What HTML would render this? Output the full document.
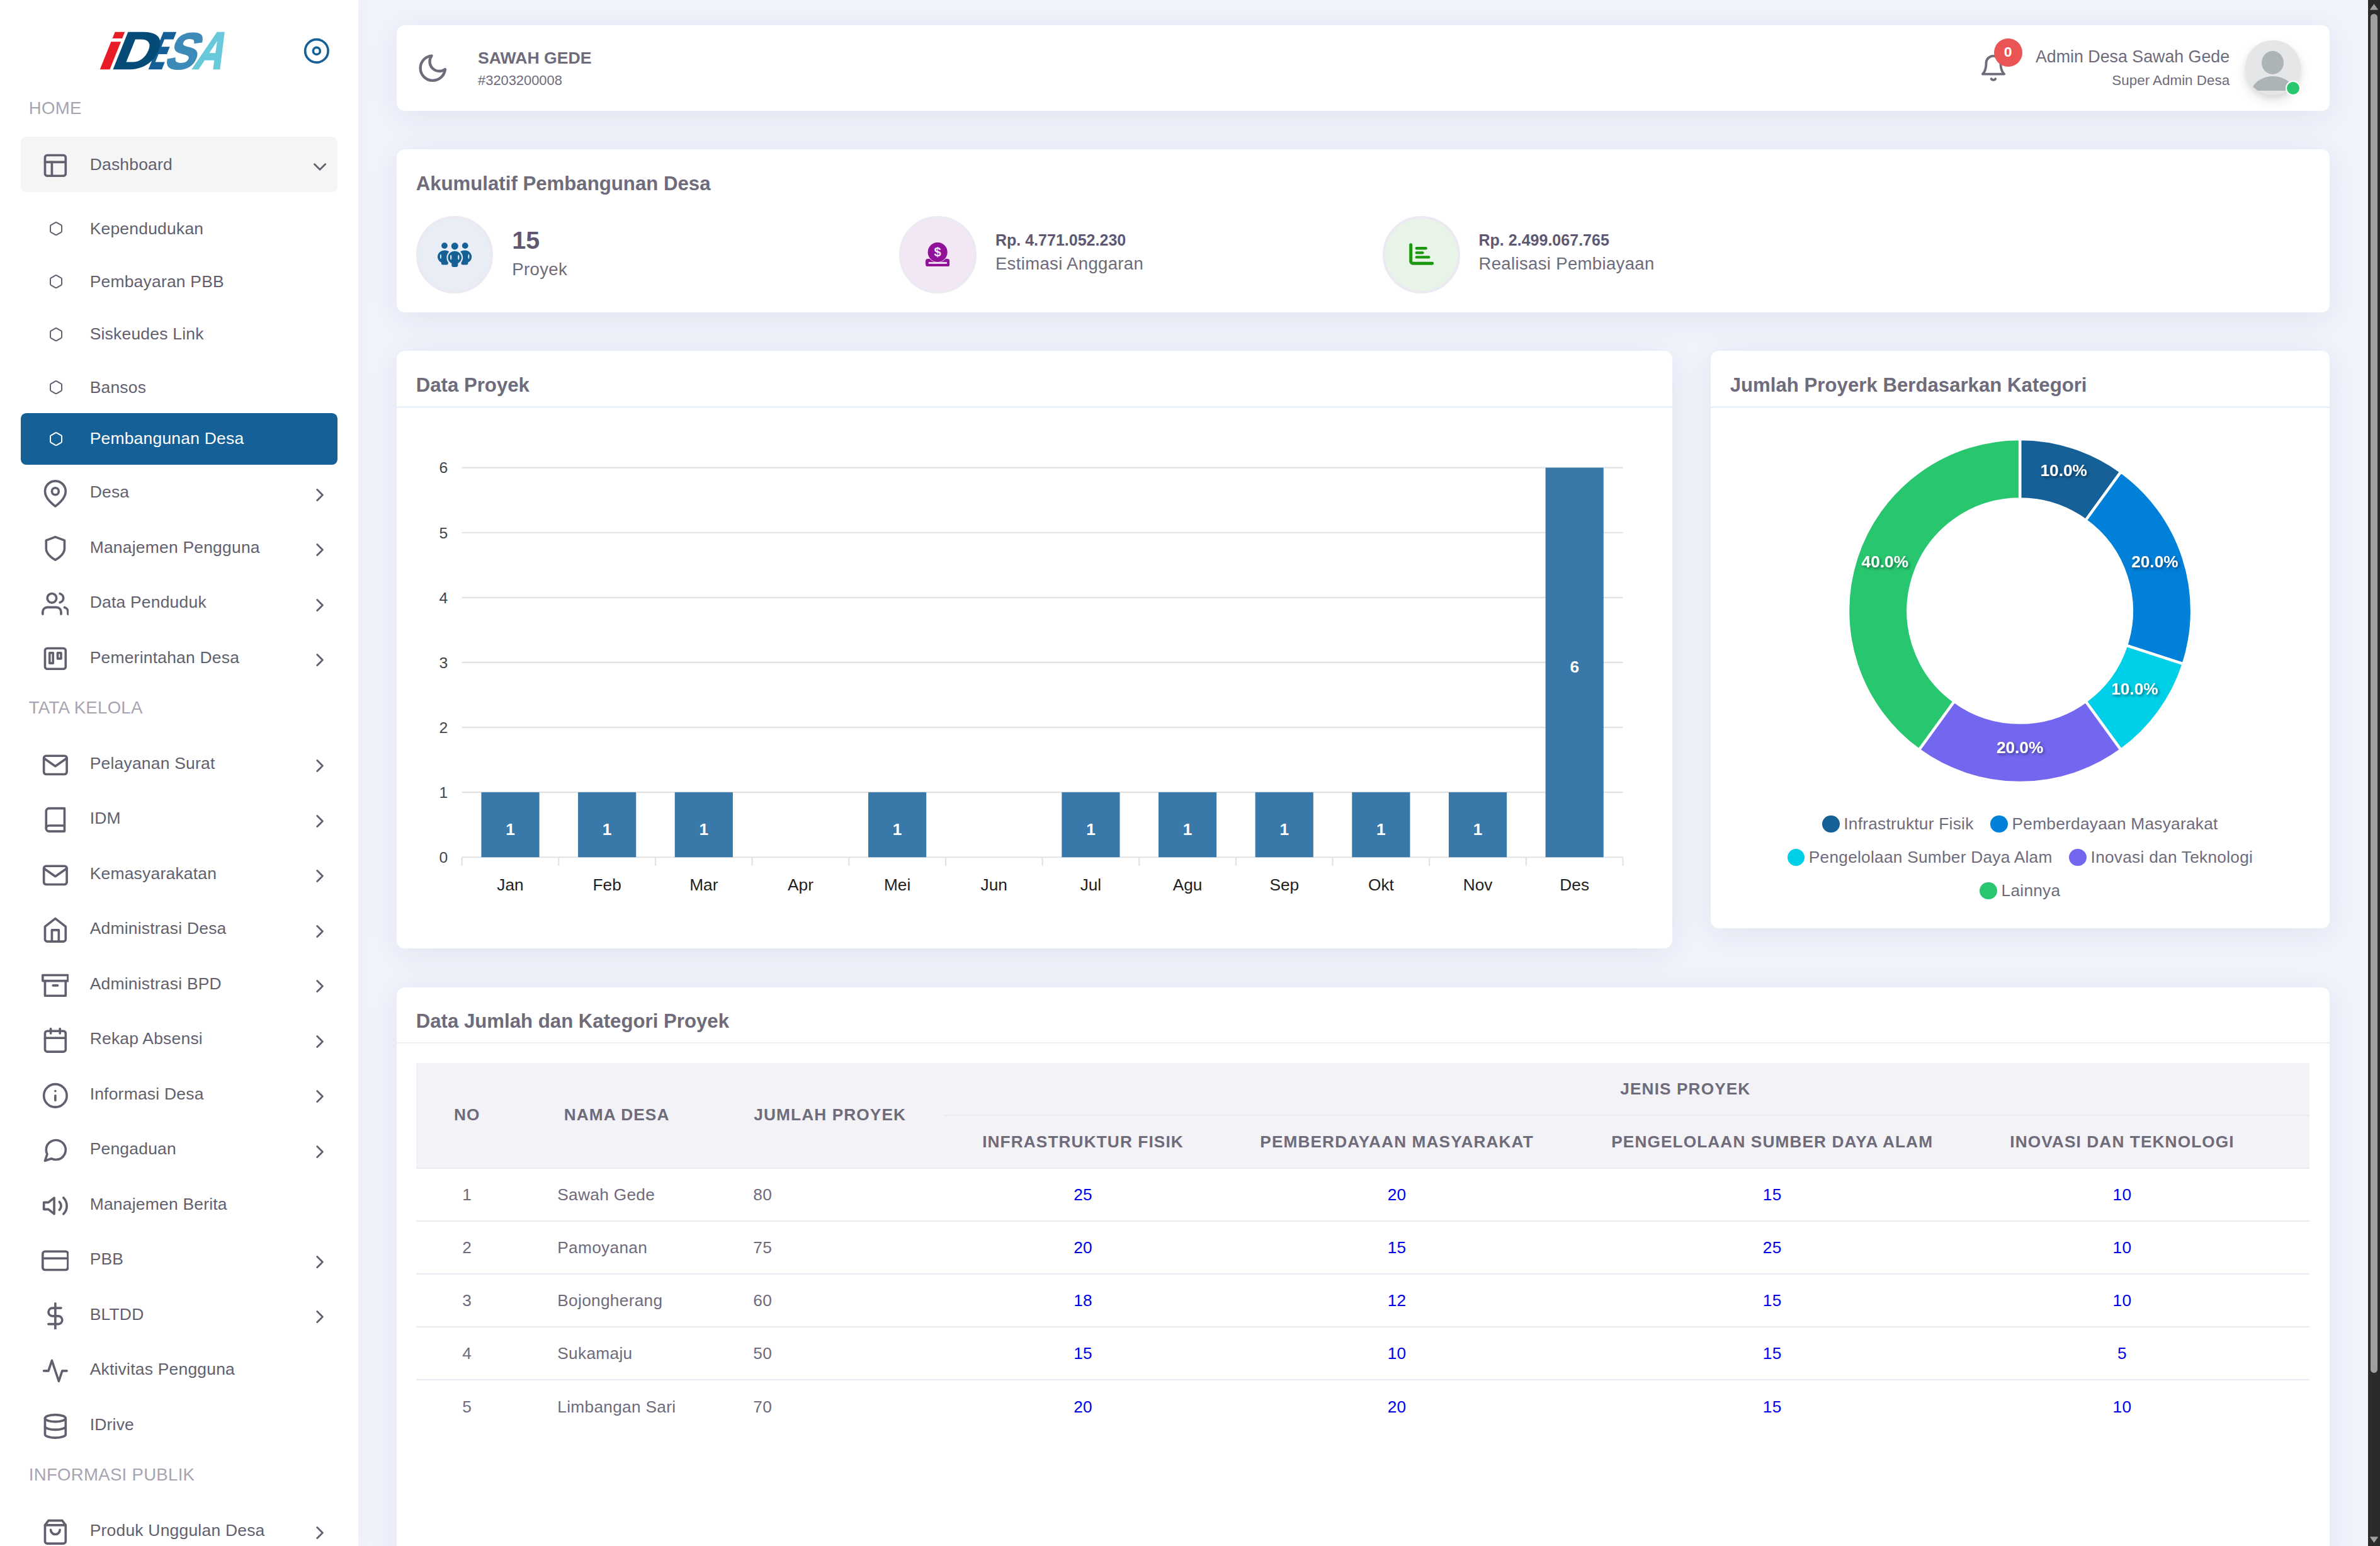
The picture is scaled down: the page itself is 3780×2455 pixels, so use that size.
<!DOCTYPE html><html lang="id"><head><meta charset="utf-8"><title>iDesa - Pembangunan Desa</title><style>
*{box-sizing:border-box;margin:0;padding:0}
html,body{width:3780px;height:2455px;overflow:hidden;background:#f1f4fd}
body{font-family:"Liberation Sans",Arial,Helvetica,sans-serif;color:#6e6b7b;font-size:12px}
#app{position:absolute;left:0;top:0;width:1728px;height:1122.3px;zoom:2.1875;overflow:hidden;background:#f1f4fd}
@supports not (zoom:2){#app{transform:scale(2.1875);transform-origin:0 0}}
.abs{position:absolute}
#side{position:absolute;left:0;top:0;width:260px;height:1122.3px;background:#fff;box-shadow:0 0 15px 0 rgba(34,41,47,.04)}
.ni{position:absolute;left:15px;width:230px;height:40px;border-radius:4px;color:#625f6e;font-size:12.1px;letter-spacing:.1px}
.ni .t{position:absolute;left:50.2px;top:-.95px;height:100%;display:flex;align-items:center;white-space:nowrap}
.ni svg.ic{position:absolute;left:15px;top:50%;margin-top:-10px;width:20px;height:20px;fill:none;stroke:#625f6e;stroke-width:2;stroke-linecap:round;stroke-linejoin:round}
.ni svg.hx{position:absolute;left:20.4px;top:50%;margin-top:-5.5px;width:11px;height:11px;fill:none;stroke:#625f6e;stroke-width:2;stroke-linecap:round;stroke-linejoin:round}
.ni svg.ch{position:absolute;left:209.3px;top:50%;margin-top:-6.9px;width:15.6px;height:15.6px;fill:none;stroke:#625f6e;stroke-width:2;stroke-linecap:round;stroke-linejoin:round}
.nh{position:absolute;left:20.9px;height:19px;line-height:19px;font-size:12.6px;color:#a6a4b0;letter-spacing:.14px;white-space:nowrap}
.card{position:absolute;background:#fff;border-radius:6px;box-shadow:0 4px 24px 0 rgba(34,41,47,.08)}
.ct{position:absolute;left:14px;margin-top:.7px;font-weight:bold;font-size:14.26px;color:#6e6b7b;white-space:nowrap;height:20px;line-height:20px}
.hl{position:absolute;left:0;right:0;height:1px;background:#ebeff8}
.av{position:absolute;width:56px;height:56px;border-radius:50%;border:2px solid #ebe9f1}
.av svg{position:absolute;left:50%;top:50%}
.sv{position:absolute;font-weight:bold;color:#5e5873;white-space:nowrap}
.sl{position:absolute;font-size:12.6px;letter-spacing:.15px;color:#6e6b7b;white-space:nowrap}

table{border-collapse:collapse;table-layout:fixed;font-size:12px;color:#6e6b7b;letter-spacing:.14px}
th{background:#f3f2f7;font-weight:bold;font-size:12px;letter-spacing:.5px;text-align:center;color:#6e6b7b;white-space:nowrap;padding:0;vertical-align:middle}
tr.r1 th{height:37.8px}
tr.r2 th{height:38.4px;border-top:1px solid #ebe9f1;padding-top:.8px}
th.jp{padding-top:.8px}
thead tr.r2 th, thead th[rowspan]{border-bottom:1px solid #ebe9f1}
td{height:38.4px;padding:.9px 0 0 28.8px;border-top:1px solid #ebe9f1;white-space:nowrap;vertical-align:middle}
tbody tr:first-child td{border-top:none}
td.c{text-align:center;padding:.9px 0 0 0}
td.j{padding-left:27.2px}
td.b{text-align:center;padding:.9px 0 0 0;color:#0000ee}
</style></head><body><div id="app">
<div id="side">
<svg class="abs" style="left:70px;top:20px;width:104px;height:34px" viewBox="0 0 104 34"><g font-family="Liberation Sans, Arial, sans-serif" font-weight="bold" font-size="37.90" stroke-width="1.10" stroke-linejoin="miter" transform="translate(0,29.70) skewX(-21.9)"><text transform="translate(0.498,0) scale(1.1346,0.9495)" fill="#e81c27" stroke="#e81c27">i</text><text transform="translate(37.191,0) scale(0.4374,1.0000)" fill="#155f97" stroke="#155f97">E</text><text transform="translate(10.020,0) scale(1.1358,1.0000)" fill="#054b78" stroke="#054b78">D</text><text transform="translate(48.343,0) scale(0.8764,0.9750)" fill="#3c8ab8" stroke="#3c8ab8">S</text><text transform="translate(69.280,0) scale(0.7630,1.0000)" fill="#67c9da" stroke="#67c9da">A</text></g></svg>
<svg class="abs" style="left:219.9px;top:26.9px;width:20px;height:20px;fill:none;stroke:#156097;stroke-width:2;stroke-linecap:round;stroke-linejoin:round" viewBox="0 0 24 24"><circle cx="12" cy="12" r="10"/><circle cx="12" cy="12" r="3"/></svg>
<div class="nh" style="top:68.90px">HOME</div>
<div class="ni" style="top:99.10px;height:40.10px;background:#f5f5f5;"><svg class="ic" viewBox="0 0 24 24" style="margin-top:-8.9px"><rect x="3" y="3" width="18" height="18" rx="2" ry="2"/><line x1="3" y1="9" x2="21" y2="9"/><line x1="9" y1="21" x2="9" y2="9"/></svg><span class="t" style="top:.4px">Dashboard</span><svg class="ch" viewBox="0 0 24 24" style="margin-top:-5.8px"><polyline points="6 9 12 15 18 9"/></svg></div>
<div class="ni" style="top:147.00px;height:38px;"><svg class="hx" viewBox="0 0 24 24" ><path d="M21 16V8a2 2 0 0 0-1-1.73l-7-4a2 2 0 0 0-2 0l-7 4A2 2 0 0 0 3 8v8a2 2 0 0 0 1 1.73l7 4a2 2 0 0 0 2 0l7-4A2 2 0 0 0 21 16z"/></svg><span class="t" style="top:0">Kependudukan</span></div>
<div class="ni" style="top:185.50px;height:38px;"><svg class="hx" viewBox="0 0 24 24" ><path d="M21 16V8a2 2 0 0 0-1-1.73l-7-4a2 2 0 0 0-2 0l-7 4A2 2 0 0 0 3 8v8a2 2 0 0 0 1 1.73l7 4a2 2 0 0 0 2 0l7-4A2 2 0 0 0 21 16z"/></svg><span class="t" style="top:0">Pembayaran PBB</span></div>
<div class="ni" style="top:223.70px;height:38px;"><svg class="hx" viewBox="0 0 24 24" ><path d="M21 16V8a2 2 0 0 0-1-1.73l-7-4a2 2 0 0 0-2 0l-7 4A2 2 0 0 0 3 8v8a2 2 0 0 0 1 1.73l7 4a2 2 0 0 0 2 0l7-4A2 2 0 0 0 21 16z"/></svg><span class="t" style="top:0">Siskeudes Link</span></div>
<div class="ni" style="top:262.20px;height:38px;"><svg class="hx" viewBox="0 0 24 24" ><path d="M21 16V8a2 2 0 0 0-1-1.73l-7-4a2 2 0 0 0-2 0l-7 4A2 2 0 0 0 3 8v8a2 2 0 0 0 1 1.73l7 4a2 2 0 0 0 2 0l7-4A2 2 0 0 0 21 16z"/></svg><span class="t" style="top:0">Bansos</span></div>
<div class="ni" style="top:299.80px;height:37.60px;background:#156097;color:#fff;"><svg class="hx" viewBox="0 0 24 24" style="stroke:#fff"><path d="M21 16V8a2 2 0 0 0-1-1.73l-7-4a2 2 0 0 0-2 0l-7 4A2 2 0 0 0 3 8v8a2 2 0 0 0 1 1.73l7 4a2 2 0 0 0 2 0l7-4A2 2 0 0 0 21 16z"/></svg><span class="t" style="top:0">Pembangunan Desa</span></div>
<div class="ni" style="top:338.30px;height:40.00px;"><svg class="ic" viewBox="0 0 24 24" ><path d="M21 10c0 7-9 13-9 13s-9-6-9-13a9 9 0 0 1 18 0z"/><circle cx="12" cy="10" r="3"/></svg><span class="t">Desa</span><svg class="ch" viewBox="0 0 24 24" ><polyline points="9 18 15 12 9 6"/></svg></div>
<div class="ni" style="top:378.30px;height:40.00px;"><svg class="ic" viewBox="0 0 24 24" ><path d="M12 22s8-4 8-10V5l-8-3-8 3v7c0 6 8 10 8 10z"/></svg><span class="t">Manajemen Pengguna</span><svg class="ch" viewBox="0 0 24 24" ><polyline points="9 18 15 12 9 6"/></svg></div>
<div class="ni" style="top:418.30px;height:40.00px;"><svg class="ic" viewBox="0 0 24 24" ><path d="M17 21v-2a4 4 0 0 0-4-4H5a4 4 0 0 0-4 4v2"/><circle cx="9" cy="7" r="4"/><path d="M23 21v-2a4 4 0 0 0-3-3.87"/><path d="M16 3.13a4 4 0 0 1 0 7.75"/></svg><span class="t">Data Penduduk</span><svg class="ch" viewBox="0 0 24 24" ><polyline points="9 18 15 12 9 6"/></svg></div>
<div class="ni" style="top:458.30px;height:40.00px;"><svg class="ic" viewBox="0 0 24 24" ><rect x="3" y="3" width="18" height="18" rx="2" ry="2"/><rect x="7" y="7" width="3" height="9"/><rect x="14" y="7" width="3" height="5"/></svg><span class="t">Pemerintahan Desa</span><svg class="ch" viewBox="0 0 24 24" ><polyline points="9 18 15 12 9 6"/></svg></div>
<div class="nh" style="top:504.00px">TATA KELOLA</div>
<div class="ni" style="top:535.20px;height:40.00px;"><svg class="ic" viewBox="0 0 24 24" ><path d="M4 4h16c1.1 0 2 .9 2 2v12c0 1.1-.9 2-2 2H4c-1.1 0-2-.9-2-2V6c0-1.1.9-2 2-2z"/><polyline points="22,6 12,13 2,6"/></svg><span class="t">Pelayanan Surat</span><svg class="ch" viewBox="0 0 24 24" ><polyline points="9 18 15 12 9 6"/></svg></div>
<div class="ni" style="top:575.20px;height:40.00px;"><svg class="ic" viewBox="0 0 24 24" ><path d="M4 19.5A2.5 2.5 0 0 1 6.5 17H20"/><path d="M6.5 2H20v20H6.5A2.5 2.5 0 0 1 4 19.5v-15A2.5 2.5 0 0 1 6.5 2z"/></svg><span class="t">IDM</span><svg class="ch" viewBox="0 0 24 24" ><polyline points="9 18 15 12 9 6"/></svg></div>
<div class="ni" style="top:615.20px;height:40.00px;"><svg class="ic" viewBox="0 0 24 24" ><path d="M4 4h16c1.1 0 2 .9 2 2v12c0 1.1-.9 2-2 2H4c-1.1 0-2-.9-2-2V6c0-1.1.9-2 2-2z"/><polyline points="22,6 12,13 2,6"/></svg><span class="t">Kemasyarakatan</span><svg class="ch" viewBox="0 0 24 24" ><polyline points="9 18 15 12 9 6"/></svg></div>
<div class="ni" style="top:655.20px;height:40.00px;"><svg class="ic" viewBox="0 0 24 24" ><path d="M3 9l9-7 9 7v11a2 2 0 0 1-2 2H5a2 2 0 0 1-2-2z"/><polyline points="9 22 9 12 15 12 15 22"/></svg><span class="t">Administrasi Desa</span><svg class="ch" viewBox="0 0 24 24" ><polyline points="9 18 15 12 9 6"/></svg></div>
<div class="ni" style="top:695.20px;height:40.00px;"><svg class="ic" viewBox="0 0 24 24" ><polyline points="21 8 21 21 3 21 3 8"/><rect x="1" y="3" width="22" height="5"/><line x1="10" y1="12" x2="14" y2="12"/></svg><span class="t">Administrasi BPD</span><svg class="ch" viewBox="0 0 24 24" ><polyline points="9 18 15 12 9 6"/></svg></div>
<div class="ni" style="top:735.20px;height:40.00px;"><svg class="ic" viewBox="0 0 24 24" ><rect x="3" y="4" width="18" height="18" rx="2" ry="2"/><line x1="16" y1="2" x2="16" y2="6"/><line x1="8" y1="2" x2="8" y2="6"/><line x1="3" y1="10" x2="21" y2="10"/></svg><span class="t">Rekap Absensi</span><svg class="ch" viewBox="0 0 24 24" ><polyline points="9 18 15 12 9 6"/></svg></div>
<div class="ni" style="top:775.20px;height:40.00px;"><svg class="ic" viewBox="0 0 24 24" ><circle cx="12" cy="12" r="10"/><line x1="12" y1="16" x2="12" y2="12"/><line x1="12" y1="8" x2="12.01" y2="8"/></svg><span class="t">Informasi Desa</span><svg class="ch" viewBox="0 0 24 24" ><polyline points="9 18 15 12 9 6"/></svg></div>
<div class="ni" style="top:815.20px;height:40.00px;"><svg class="ic" viewBox="0 0 24 24" ><path d="M21 11.5a8.38 8.38 0 0 1-.9 3.8 8.5 8.5 0 0 1-7.6 4.7 8.38 8.38 0 0 1-3.8-.9L3 21l1.9-5.7a8.38 8.38 0 0 1-.9-3.8 8.5 8.5 0 0 1 4.7-7.6 8.38 8.38 0 0 1 3.8-.9h.5a8.48 8.48 0 0 1 8 8v.5z"/></svg><span class="t">Pengaduan</span><svg class="ch" viewBox="0 0 24 24" ><polyline points="9 18 15 12 9 6"/></svg></div>
<div class="ni" style="top:855.20px;height:40.00px;"><svg class="ic" viewBox="0 0 24 24" ><polygon points="11 5 6 9 2 9 2 15 6 15 11 19 11 5"/><path d="M19.07 4.93a10 10 0 0 1 0 14.14M15.54 8.46a5 5 0 0 1 0 7.07"/></svg><span class="t">Manajemen Berita</span></div>
<div class="ni" style="top:895.20px;height:40.00px;"><svg class="ic" viewBox="0 0 24 24" ><rect x="1" y="4" width="22" height="16" rx="2" ry="2"/><line x1="1" y1="10" x2="23" y2="10"/></svg><span class="t">PBB</span><svg class="ch" viewBox="0 0 24 24" ><polyline points="9 18 15 12 9 6"/></svg></div>
<div class="ni" style="top:935.20px;height:40.00px;"><svg class="ic" viewBox="0 0 24 24" ><line x1="12" y1="1" x2="12" y2="23"/><path d="M17 5H9.5a3.5 3.5 0 0 0 0 7h5a3.5 3.5 0 0 1 0 7H6"/></svg><span class="t">BLTDD</span><svg class="ch" viewBox="0 0 24 24" ><polyline points="9 18 15 12 9 6"/></svg></div>
<div class="ni" style="top:975.20px;height:40.00px;"><svg class="ic" viewBox="0 0 24 24" ><polyline points="22 12 18 12 15 21 9 3 6 12 2 12"/></svg><span class="t">Aktivitas Pengguna</span></div>
<div class="ni" style="top:1015.20px;height:40.00px;"><svg class="ic" viewBox="0 0 24 24" ><ellipse cx="12" cy="5" rx="9" ry="3"/><path d="M21 12c0 1.66-4 3-9 3s-9-1.34-9-3"/><path d="M3 5v14c0 1.66 4 3 9 3s9-1.34 9-3V5"/></svg><span class="t">IDrive</span></div>
<div class="nh" style="top:1061.10px">INFORMASI PUBLIK</div>
<div class="ni" style="top:1092.00px;height:40.00px;"><svg class="ic" viewBox="0 0 24 24" ><path d="M6 2L3 6v14a2 2 0 0 0 2 2h14a2 2 0 0 0 2-2V6l-3-4z"/><line x1="3" y1="6" x2="21" y2="6"/><path d="M16 10a4 4 0 0 1-8 0"/></svg><span class="t">Produk Unggulan Desa</span><svg class="ch" viewBox="0 0 24 24" ><polyline points="9 18 15 12 9 6"/></svg></div>
</div>
<div class="card" style="left:288.00px;top:18.2px;width:1403.30px;height:62.4px">
<svg class="abs" style="left:14.3px;top:19.2px;width:24px;height:24px;fill:none;stroke:#6e6b7b;stroke-width:2;stroke-linecap:round;stroke-linejoin:round" viewBox="0 0 24 24"><path d="M21 12.79A9 9 0 1 1 11.21 3 7 7 0 0 0 21 12.79z"/></svg>
<div class="abs" style="left:59px;top:15.4px;height:17px;line-height:17px;font-weight:bold;font-size:12.17px;color:#6e6b7b;white-space:nowrap">SAWAH GEDE</div>
<div class="abs" style="left:59px;top:33.7px;height:13px;line-height:13px;font-size:10px;color:#6e6b7b;white-space:nowrap">#3203200008</div>
<svg class="abs" style="left:1149.00px;top:20.5px;width:21px;height:21px;fill:none;stroke:#6e6b7b;stroke-width:2;stroke-linecap:round;stroke-linejoin:round" viewBox="0 0 24 24"><path d="M18 8A6 6 0 0 0 6 8c0 7-3 9-3 9h18s-3-2-3-9"/><path d="M13.73 21a2 2 0 0 1-3.46 0"/></svg>
<div class="abs" style="left:1159.60px;top:9.5px;width:20.6px;height:20.6px;border-radius:10.3px;background:#ea5455;color:#fff;font-weight:bold;font-size:10.5px;line-height:19.4px;text-align:center">0</div>
<div class="abs" style="right:72.50px;top:14.6px;height:17px;line-height:17px;font-size:12.25px;color:#6e6b7b;white-space:nowrap">Admin Desa Sawah Gede</div>
<div class="abs" style="right:72.50px;top:33.8px;height:13px;line-height:13px;font-size:10.25px;color:#6e6b7b;white-space:nowrap">Super Admin Desa</div>
<div class="abs" style="left:1342.20px;top:11.00px;width:40px;height:40px;border-radius:50%;background:#e4e6e7;overflow:hidden;box-shadow:0 4px 8px 0 rgba(34,41,47,.12),0 2px 4px 0 rgba(34,41,47,.08)"><div class="abs" style="left:12px;top:7.9px;width:16px;height:17px;border-radius:50%;background:#adb4b7"></div><div class="abs" style="left:0;top:0;width:40px;height:36.4px;overflow:hidden"><div class="abs" style="left:4px;top:26.2px;width:32px;height:26px;border-radius:50%;background:#adb4b7"></div></div></div>
<div class="abs" style="left:1371.40px;top:40.40px;width:11px;height:11px;border-radius:50%;background:#28c76f;border:1px solid #fff"></div>
</div>
<div class="card" style="left:288.00px;top:108.30px;width:1403.30px;height:118.3px">
<div class="ct" style="top:14.30px">Akumulatif Pembangunan Desa</div>
<div class="av" style="left:14.10px;top:48.50px;background:#e8edf6">
<svg style="width:24.8px;height:17.8px;margin:-8.9px 0 0 -12.4px" viewBox="0 0 64.5 46.2"><g fill="#156097"><circle cx="13" cy="6.1" r="5.8"/><circle cx="52" cy="6.1" r="5.8"/><path d="M13.500 14.800c-7.500 0-13.500 5.500-13.500 12.200 0 4.600 2.800 8.600 7 10.700v1.500a3 3 0 0 0 3 3h7a3 3 0 0 0 3-3v-13.500l1.500-8.500c-2.300-1.500-5-2.400-8-2.400z"/><path d="M51 14.800c7.500 0 13.500 5.500 13.500 12.200 0 4.600-2.800 8.600-7 10.700v1.500a3 3 0 0 1-3 3h-7a3 3 0 0 1-3-3v-13.500l-1.500-8.500c2.300-1.500 5-2.400 8-2.400z"/></g><circle cx="32.400" cy="28.500" r="15.300" fill="#e8edf6"/><rect x="23.800" y="34" width="17.200" height="12" fill="#e8edf6"/><g fill="#156097"><circle cx="32.400" cy="6.900" r="6.600"/><path d="M32.400 16.400c-7.200 0-12.800 5.300-12.800 12 0 4.800 2.800 8.900 6.800 10.800v3.500a3.500 3.500 0 0 0 3.500 3.500h5a3.500 3.500 0 0 0 3.500-3.500v-3.500c4-1.900 6.800-6 6.800-10.800 0-6.700-5.600-12-12.800-12z"/></g><g fill="#e8edf6"><ellipse cx="25.200" cy="28" rx="1.300" ry="4.600"/><ellipse cx="39.600" cy="28" rx="1.300" ry="4.600"/><ellipse cx="5.800" cy="26.500" rx="1.200" ry="4.400"/><ellipse cx="58.700" cy="26.500" rx="1.200" ry="4.400"/></g></svg></div>
<div class="sv" style="left:83.80px;top:55.00px;font-size:18px;height:22px;line-height:22px">15</div>
<div class="sl" style="left:83.80px;top:79.20px;height:16px;line-height:16px">Proyek</div>
<div class="av" style="left:364.90px;top:48.50px;background:#f3e7f5">
<svg style="width:17.5px;height:17.5px;margin:-8.9px 0 0 -8.9px" viewBox="0 0 36 36"><rect x="0" y="24.500" width="36" height="11.500" rx="3.300" fill="#8f1298"/><rect x="4.500" y="29.300" width="27.400" height="2.600" fill="#f3e7f5"/><circle cx="18" cy="14.500" r="15.400" fill="#f3e7f5"/><circle cx="18" cy="14.500" r="14.600" fill="#8f1298"/><text x="18" y="21" text-anchor="middle" font-family="Liberation Sans, Arial, sans-serif" font-weight="bold" font-size="19" fill="#f3e7f5">$</text></svg></div>
<div class="sv" style="left:434.70px;top:58.90px;font-size:11.45px;height:14px;line-height:14px">Rp. 4.771.052.230</div>
<div class="sl" style="left:434.70px;top:75.00px;height:16px;line-height:16px">Estimasi Anggaran</div>
<div class="av" style="left:715.90px;top:48.50px;background:#e9f4e8">
<svg style="width:18px;height:16px;margin:-8.300px 0 0 -9px" viewBox="0 0 36 32" fill="none" stroke="#1c970f" stroke-linecap="round" stroke-linejoin="round"><path d="M2.500 2.500v24a3 3 0 0 0 3 3h28" stroke-width="4.600"/><path d="M10.800 7.500h13.600M10.800 14h8.800M10.800 20.500h17.800" stroke-width="4"/></svg></div>
<div class="sv" style="left:785.60px;top:58.90px;font-size:11.45px;height:14px;line-height:14px">Rp. 2.499.067.765</div>
<div class="sl" style="left:785.60px;top:75.00px;height:16px;line-height:16px">Realisasi Pembiayaan</div>
</div>
<div class="card" style="left:288.00px;top:254.60px;width:926.20px;height:433.70px">
<div class="ct" style="top:14.40px">Data Proyek</div>
<div class="hl" style="top:40.40px"></div>
<svg class="abs" style="left:0;top:0;width:926.20px;height:433.70px" viewBox="0 0 926.20 433.70" font-family="Liberation Sans, Arial, sans-serif" font-size="12"><line x1="47.40" y1="367.65" x2="890.30" y2="367.65" stroke="#e2e2e2" stroke-width="1"/><text x="37.10" y="371.65" text-anchor="end" fill="#41464b" font-size="11.3">0</text><line x1="47.40" y1="320.52" x2="890.30" y2="320.52" stroke="#e2e2e2" stroke-width="1"/><text x="37.10" y="324.52" text-anchor="end" fill="#41464b" font-size="11.3">1</text><line x1="47.40" y1="273.39" x2="890.30" y2="273.39" stroke="#e2e2e2" stroke-width="1"/><text x="37.10" y="277.39" text-anchor="end" fill="#41464b" font-size="11.3">2</text><line x1="47.40" y1="226.26" x2="890.30" y2="226.26" stroke="#e2e2e2" stroke-width="1"/><text x="37.10" y="230.26" text-anchor="end" fill="#41464b" font-size="11.3">3</text><line x1="47.40" y1="179.13" x2="890.30" y2="179.13" stroke="#e2e2e2" stroke-width="1"/><text x="37.10" y="183.13" text-anchor="end" fill="#41464b" font-size="11.3">4</text><line x1="47.40" y1="132.00" x2="890.30" y2="132.00" stroke="#e2e2e2" stroke-width="1"/><text x="37.10" y="136.00" text-anchor="end" fill="#41464b" font-size="11.3">5</text><line x1="47.40" y1="84.87" x2="890.30" y2="84.87" stroke="#e2e2e2" stroke-width="1"/><text x="37.10" y="88.87" text-anchor="end" fill="#41464b" font-size="11.3">6</text><line x1="47.40" y1="367.65" x2="47.40" y2="373.85" stroke="#e2e2e2" stroke-width="1"/><line x1="117.64" y1="367.65" x2="117.64" y2="373.85" stroke="#e2e2e2" stroke-width="1"/><line x1="187.88" y1="367.65" x2="187.88" y2="373.85" stroke="#e2e2e2" stroke-width="1"/><line x1="258.12" y1="367.65" x2="258.12" y2="373.85" stroke="#e2e2e2" stroke-width="1"/><line x1="328.37" y1="367.65" x2="328.37" y2="373.85" stroke="#e2e2e2" stroke-width="1"/><line x1="398.61" y1="367.65" x2="398.61" y2="373.85" stroke="#e2e2e2" stroke-width="1"/><line x1="468.85" y1="367.65" x2="468.85" y2="373.85" stroke="#e2e2e2" stroke-width="1"/><line x1="539.09" y1="367.65" x2="539.09" y2="373.85" stroke="#e2e2e2" stroke-width="1"/><line x1="609.33" y1="367.65" x2="609.33" y2="373.85" stroke="#e2e2e2" stroke-width="1"/><line x1="679.57" y1="367.65" x2="679.57" y2="373.85" stroke="#e2e2e2" stroke-width="1"/><line x1="749.82" y1="367.65" x2="749.82" y2="373.85" stroke="#e2e2e2" stroke-width="1"/><line x1="820.06" y1="367.65" x2="820.06" y2="373.85" stroke="#e2e2e2" stroke-width="1"/><line x1="890.30" y1="367.65" x2="890.30" y2="373.85" stroke="#e2e2e2" stroke-width="1"/><rect x="61.45" y="320.52" width="42.14" height="47.13" fill="#3879a9"/><text x="82.52" y="351.38" text-anchor="middle" fill="#fff" font-weight="bold">1</text><text x="82.52" y="391.70" text-anchor="middle" fill="#1f1f1f">Jan</text><rect x="131.69" y="320.52" width="42.14" height="47.13" fill="#3879a9"/><text x="152.76" y="351.38" text-anchor="middle" fill="#fff" font-weight="bold">1</text><text x="152.76" y="391.70" text-anchor="middle" fill="#1f1f1f">Feb</text><rect x="201.93" y="320.52" width="42.14" height="47.13" fill="#3879a9"/><text x="223.00" y="351.38" text-anchor="middle" fill="#fff" font-weight="bold">1</text><text x="223.00" y="391.70" text-anchor="middle" fill="#1f1f1f">Mar</text><text x="293.25" y="391.70" text-anchor="middle" fill="#1f1f1f">Apr</text><rect x="342.41" y="320.52" width="42.14" height="47.13" fill="#3879a9"/><text x="363.49" y="351.38" text-anchor="middle" fill="#fff" font-weight="bold">1</text><text x="363.49" y="391.70" text-anchor="middle" fill="#1f1f1f">Mei</text><text x="433.73" y="391.70" text-anchor="middle" fill="#1f1f1f">Jun</text><rect x="482.90" y="320.52" width="42.14" height="47.13" fill="#3879a9"/><text x="503.97" y="351.38" text-anchor="middle" fill="#fff" font-weight="bold">1</text><text x="503.97" y="391.70" text-anchor="middle" fill="#1f1f1f">Jul</text><rect x="553.14" y="320.52" width="42.14" height="47.13" fill="#3879a9"/><text x="574.21" y="351.38" text-anchor="middle" fill="#fff" font-weight="bold">1</text><text x="574.21" y="391.70" text-anchor="middle" fill="#1f1f1f">Agu</text><rect x="623.38" y="320.52" width="42.14" height="47.13" fill="#3879a9"/><text x="644.45" y="351.38" text-anchor="middle" fill="#fff" font-weight="bold">1</text><text x="644.45" y="391.70" text-anchor="middle" fill="#1f1f1f">Sep</text><rect x="693.62" y="320.52" width="42.14" height="47.13" fill="#3879a9"/><text x="714.70" y="351.38" text-anchor="middle" fill="#fff" font-weight="bold">1</text><text x="714.70" y="391.70" text-anchor="middle" fill="#1f1f1f">Okt</text><rect x="763.86" y="320.52" width="42.14" height="47.13" fill="#3879a9"/><text x="784.94" y="351.38" text-anchor="middle" fill="#fff" font-weight="bold">1</text><text x="784.94" y="391.70" text-anchor="middle" fill="#1f1f1f">Nov</text><rect x="834.11" y="84.87" width="42.14" height="282.78" fill="#3879a9"/><text x="855.18" y="233.56" text-anchor="middle" fill="#fff" font-weight="bold">6</text><text x="855.18" y="391.70" text-anchor="middle" fill="#1f1f1f">Des</text></svg>
</div>
<div class="card" style="left:1242.10px;top:254.60px;width:449.20px;height:419.00px">
<div class="ct" style="top:14.40px">Jumlah Proyerk Berdasarkan Kategori</div>
<div class="hl" style="top:40.40px"></div>
<svg class="abs" style="left:0;top:0;width:449.20px;height:419.00px" viewBox="0 0 449.20 419.00" font-family="Liberation Sans, Arial, sans-serif" font-size="12"><defs><filter id="ds" x="-20%" y="-20%" width="140%" height="150%"><feDropShadow dx="1" dy="1" stdDeviation="1" flood-color="#000" flood-opacity=".45"/></filter></defs><path d="M224.50 64.00A124.80 124.80 0 0 1 297.86 87.83L272.23 123.11A81.20 81.20 0 0 0 224.50 107.60Z" fill="#156097" stroke="#fff" stroke-width="2"/><path d="M297.86 87.83A124.80 124.80 0 0 1 343.19 227.37L301.73 213.89A81.20 81.20 0 0 0 272.23 123.11Z" fill="#0080d9" stroke="#fff" stroke-width="2"/><path d="M343.19 227.37A124.80 124.80 0 0 1 297.86 289.77L272.23 254.49A81.20 81.20 0 0 0 301.73 213.89Z" fill="#00cfe8" stroke="#fff" stroke-width="2"/><path d="M297.86 289.77A124.80 124.80 0 0 1 151.14 289.77L176.77 254.49A81.20 81.20 0 0 0 272.23 254.49Z" fill="#7367f0" stroke="#fff" stroke-width="2"/><path d="M151.14 289.77A124.80 124.80 0 0 1 224.50 64.00L224.50 107.60A81.20 81.20 0 0 0 176.77 254.49Z" fill="#28c76f" stroke="#fff" stroke-width="2"/><text x="256.33" y="91.14" text-anchor="middle" fill="#fff" font-weight="bold" filter="url(#ds)">10.0%</text><text x="322.46" y="157.27" text-anchor="middle" fill="#fff" font-weight="bold" filter="url(#ds)">20.0%</text><text x="307.83" y="249.64" text-anchor="middle" fill="#fff" font-weight="bold" filter="url(#ds)">10.0%</text><text x="224.50" y="292.10" text-anchor="middle" fill="#fff" font-weight="bold" filter="url(#ds)">20.0%</text><text x="126.54" y="157.27" text-anchor="middle" fill="#fff" font-weight="bold" filter="url(#ds)">40.0%</text></svg>
<div class="abs" style="left:0;right:0;top:335.60px;height:16px;display:flex;justify-content:center;align-items:center;font-size:12px;color:#6e6b7b;white-space:nowrap;letter-spacing:.12px"><span style="display:inline-block;width:12.6px;height:12.6px;border-radius:50%;background:#156097;margin-left:0.0px;margin-right:3px"></span><span>Infrastruktur Fisik</span><span style="display:inline-block;width:12.6px;height:12.6px;border-radius:50%;background:#0080d9;margin-left:12.3px;margin-right:3px"></span><span>Pemberdayaan Masyarakat</span></div>
<div class="abs" style="left:0;right:0;top:359.70px;height:16px;display:flex;justify-content:center;align-items:center;font-size:12px;color:#6e6b7b;white-space:nowrap;letter-spacing:.12px"><span style="display:inline-block;width:12.6px;height:12.6px;border-radius:50%;background:#00cfe8;margin-left:0.0px;margin-right:3px"></span><span>Pengelolaan Sumber Daya Alam</span><span style="display:inline-block;width:12.6px;height:12.6px;border-radius:50%;background:#7367f0;margin-left:12.3px;margin-right:3px"></span><span>Inovasi dan Teknologi</span></div>
<div class="abs" style="left:0;right:0;top:384.10px;height:16px;display:flex;justify-content:center;align-items:center;font-size:12px;color:#6e6b7b;white-space:nowrap;letter-spacing:.12px"><span style="display:inline-block;width:12.6px;height:12.6px;border-radius:50%;background:#28c76f;margin-left:0.0px;margin-right:3px"></span><span>Lainnya</span></div>
</div>
<div class="card" style="left:288.00px;top:716.60px;width:1403.30px;height:423.40px;border-bottom-left-radius:0;border-bottom-right-radius:0">
<div class="ct" style="top:14.10px">Data Jumlah dan Kategori Proyek</div>
<div class="hl" style="top:40.00px"></div>
<div class="abs" style="left:14.3px;top:55.00px;width:1374.70px;height:340px;overflow:hidden">
<table style="width:1459.60px"><colgroup><col style="width:73.60px"><col style="width:143.80px"><col style="width:165.80px"><col style="width:201.60px"><col style="width:254.20px"><col style="width:290.80px"><col style="width:217.40px"><col style="width:112.40px"></colgroup>
<thead><tr class="r1"><th rowspan="2">NO</th><th rowspan="2">NAMA DESA</th><th rowspan="2">JUMLAH PROYEK</th><th colspan="5" class="jp">JENIS PROYEK</th></tr>
<tr class="r2"><th>INFRASTRUKTUR FISIK</th><th>PEMBERDAYAAN MASYARAKAT</th><th>PENGELOLAAN SUMBER DAYA ALAM</th><th>INOVASI DAN TEKNOLOGI</th><th></th></tr></thead><tbody>
<tr><td class="c">1</td><td>Sawah Gede</td><td class="j">80</td><td class="b">25</td><td class="b">20</td><td class="b">15</td><td class="b">10</td><td></td></tr>
<tr><td class="c">2</td><td>Pamoyanan</td><td class="j">75</td><td class="b">20</td><td class="b">15</td><td class="b">25</td><td class="b">10</td><td></td></tr>
<tr><td class="c">3</td><td>Bojongherang</td><td class="j">60</td><td class="b">18</td><td class="b">12</td><td class="b">15</td><td class="b">10</td><td></td></tr>
<tr><td class="c">4</td><td>Sukamaju</td><td class="j">50</td><td class="b">15</td><td class="b">10</td><td class="b">15</td><td class="b">5</td><td></td></tr>
<tr><td class="c">5</td><td>Limbangan Sari</td><td class="j">70</td><td class="b">20</td><td class="b">20</td><td class="b">15</td><td class="b">10</td><td></td></tr>
</tbody></table></div>
</div>
<div class="abs" style="left:1719.314px;top:0;width:8.686px;height:1122.3px;background:#2b2b2b">
<div class="abs" style="left:1.829px;top:10.194px;width:5.120px;height:986.514px;border-radius:2.560px;background:#9f9f9f"></div>
<svg class="abs" style="left:1.371px;top:2.743px;width:5.943px;height:4.571px" viewBox="0 0 13 10"><path d="M6.500 .8L12.400 9.200H.6z" fill="#9f9f9f" stroke="#9f9f9f" stroke-width="1" stroke-linejoin="round"/></svg>
<svg class="abs" style="left:1.371px;top:1115.429px;width:5.943px;height:4.571px" viewBox="0 0 13 10"><path d="M6.500 9.200L12.400 .8H.6z" fill="#9f9f9f" stroke="#9f9f9f" stroke-width="1" stroke-linejoin="round"/></svg>
</div>
</div></body></html>
